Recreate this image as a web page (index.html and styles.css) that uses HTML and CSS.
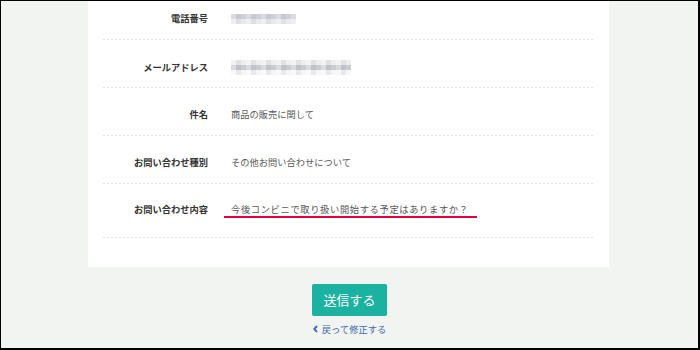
FILE: index.html
```html
<!DOCTYPE html>
<html lang="ja">
<head>
<meta charset="utf-8">
<title>確認画面</title>
<link rel="stylesheet" href="styles.css">
</head>
<body>
<div class="frame">
  <section class="card">
    <div class="row">
      <div class="label">電話番号</div>
      <div class="value"><span class="mosaic mosaic-tel" aria-label="非表示"></span></div>
    </div>
    <div class="row">
      <div class="label">メールアドレス</div>
      <div class="value"><span class="mosaic mosaic-mail" aria-label="非表示"></span></div>
    </div>
    <div class="row">
      <div class="label">件名</div>
      <div class="value">商品の販売に関して</div>
    </div>
    <div class="row">
      <div class="label">お問い合わせ種別</div>
      <div class="value">その他お問い合わせについて</div>
    </div>
    <div class="row row-last">
      <div class="label">お問い合わせ内容</div>
      <div class="value"><span class="marked">今後コンビニで取り扱い開始する予定はありますか？</span></div>
    </div>
  </section>
  <div class="actions">
    <button class="submit" type="button">送信する</button>
    <a class="back" href="#"><svg class="chev" width="5" height="8" viewBox="0 0 5 8"><path d="M4 1 L1.2 4 L4 7" fill="none" stroke="#3b6db0" stroke-width="1.9"/></svg><span>戻って修正する</span></a>
  </div>
</div>
</body>
</html>
```

FILE: styles.css
```css
html, body {
  margin: 0;
  padding: 0;
}
body {
  font-family: "Noto Sans CJK JP", "Noto Sans", sans-serif;
}
.frame {
  width: 700px;
  height: 350px;
  box-sizing: border-box;
  border-style: solid;
  border-color: #000;
  border-width: 1px 2px 2px 1px;
  background: #f2f4f2;
  overflow: hidden;
}
.card {
  margin-top: -9px;
  margin-left: 87px;
  width: 521px;
  box-sizing: border-box;
  padding: 0 14px 29px 15px;
  background: #fff;
}
.row {
  display: grid;
  grid-template-columns: 105px 1fr;
  column-gap: 23px;
  align-items: center;
  padding: 18px 0 15px;
  height: 48px;
  box-sizing: border-box;
  background: repeating-linear-gradient(to right, #e2e2e2 0 2px, transparent 2px 4px) left bottom / 100% 1px no-repeat;
}
.row-last {
  height: 54px;
  padding: 17px 0 22px;
}
.label {
  text-align: right;
  font-weight: bold;
  font-size: 9.25px;
  line-height: 14px;
  color: #333;
  white-space: nowrap;
}
.value {
  font-size: 9.25px;
  line-height: 14px;
  color: #5a5a5a;
  white-space: nowrap;
}
.mosaic {
  display: inline-block;
  vertical-align: middle;
}
.mosaic-tel {
  width: 65px;
  height: 10px;
  background:
    repeating-linear-gradient(to right, rgba(255,255,255,0.25) 0 5px, rgba(120,120,140,0.08) 5px 10px, rgba(255,255,255,0) 10px 15px),
    linear-gradient(to bottom, #cdd0d6 0 5px, #e8e9eb 5px 10px);
}
.mosaic-mail {
  width: 120px;
  height: 15px;
  margin-top: 2px;
  background:
    repeating-linear-gradient(to right, rgba(255,255,255,0.3) 0 5px, rgba(110,115,130,0.1) 5px 10px, rgba(255,255,255,0) 10px 15px),
    linear-gradient(to bottom, #eeeeef 0 5px, #c8cbd2 5px 10px, #f6f6f7 10px 15px);
}
.marked {
  position: relative;
  letter-spacing: 0.65px;
  color: #555;
}
.marked::after {
  content: "";
  position: absolute;
  left: -7px;
  right: -8px;
  bottom: -2px;
  height: 2px;
  background: #e2003c;
}
.actions {
  display: flex;
  flex-direction: column;
  align-items: center;
  padding-top: 17px;
}
.submit {
  width: 75px;
  height: 32px;
  border: 0;
  border-radius: 2px;
  background: #1cb2a2;
  color: #fff;
  font-family: "Noto Sans CJK JP", "Noto Sans", sans-serif;
  font-size: 13px;
  line-height: 32px;
  padding: 0;
}
.back {
  display: flex;
  align-items: center;
  gap: 4px;
  margin-top: 7px;
  color: #3b6db0;
  text-decoration: none;
  font-size: 9.25px;
  line-height: 12px;
}
.chev {
  display: block;
}
```
